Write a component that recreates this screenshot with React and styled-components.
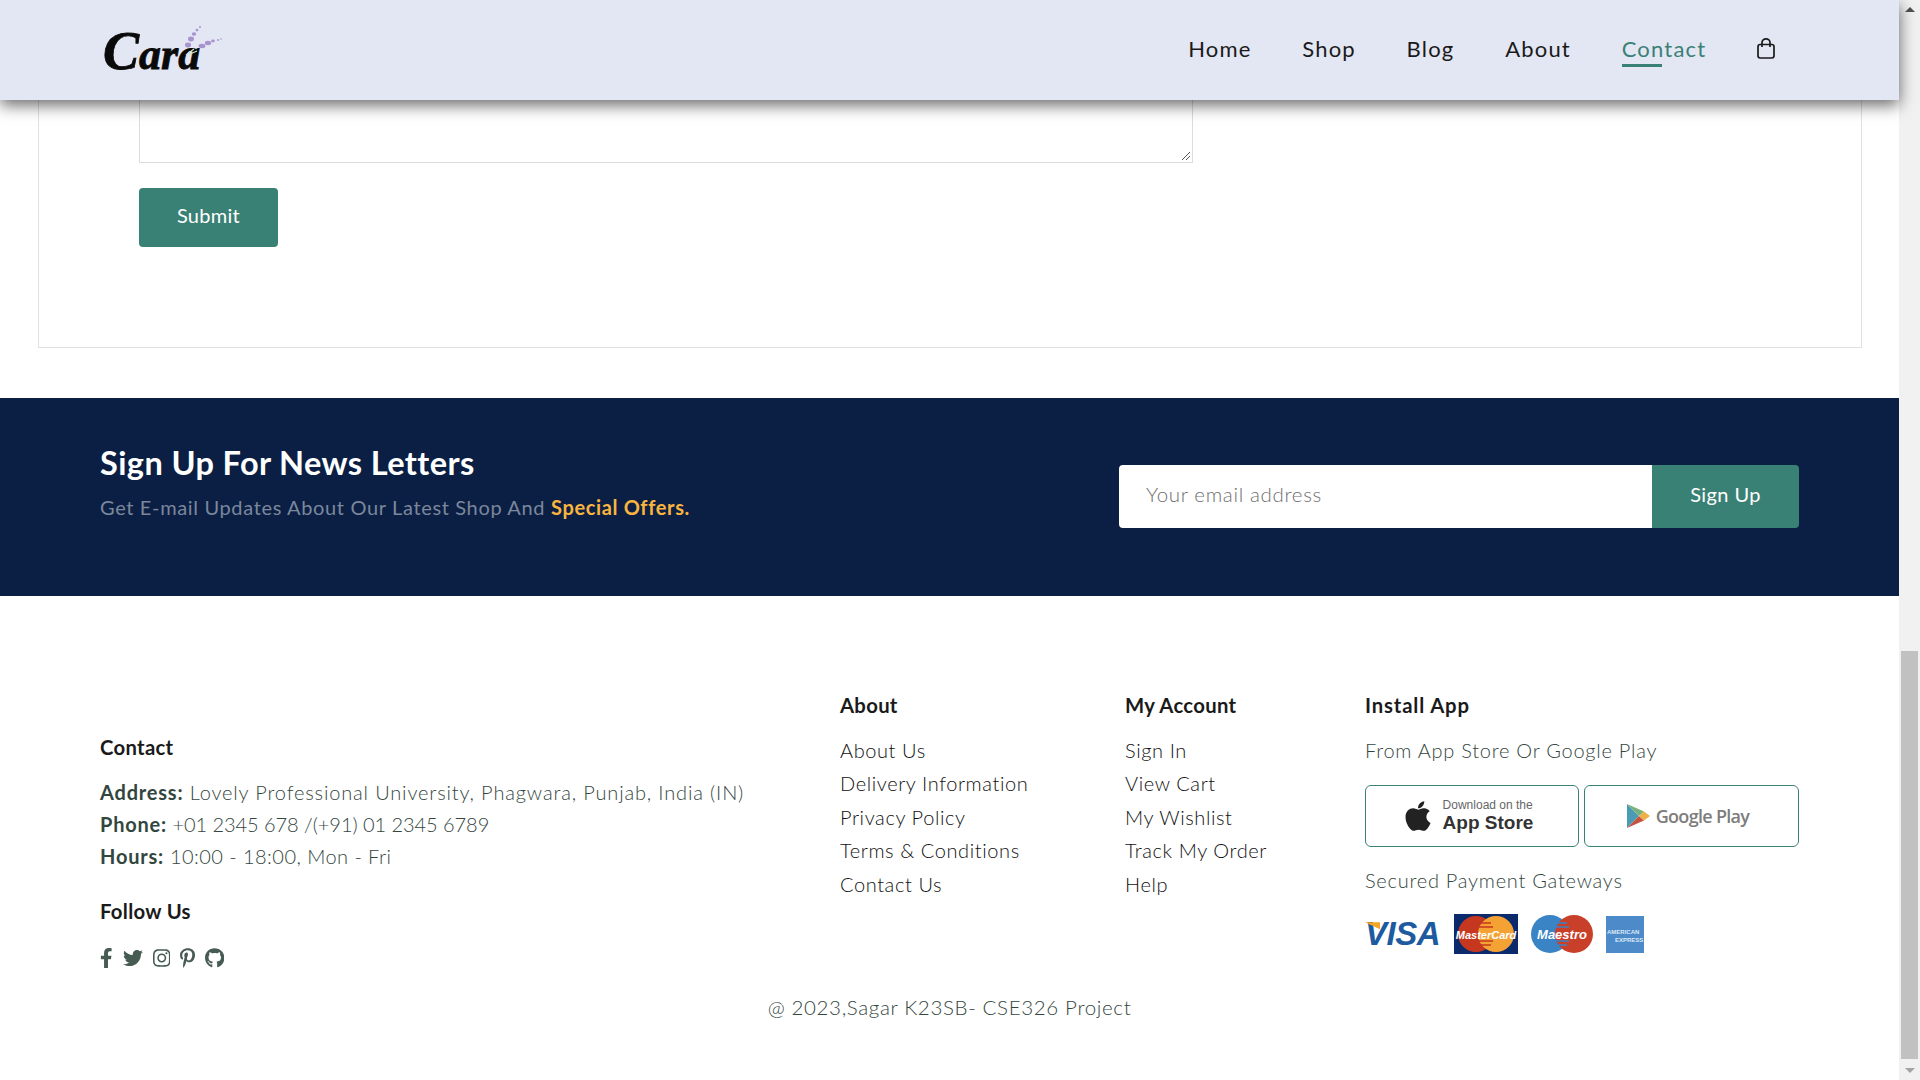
import React from 'react'
import styled, { createGlobalStyle } from 'styled-components'
import { FaApple, FaFacebookF, FaTwitter, FaInstagram, FaPinterestP, FaGithub } from 'react-icons/fa'

const GlobalStyle = createGlobalStyle`
  html, body {
    margin: 0;
    height: 100%;
    overflow: hidden;
    background: #fff;
    font-family: "Lato", "Open Sans", sans-serif;
  }
  * { box-sizing: border-box; }
`

const Screen = styled.div`
  display: flex;
  width: 1920px;
  height: 1080px;
  overflow: hidden;
`

const Page = styled.div`
  width: 1899px;
  display: flex;
  flex-direction: column;
`

const Scrollbar = styled.div`
  width: 21px;
  background: #f1f1f1;
  display: flex;
  flex-direction: column;
  align-items: center;
  padding: 7px 2px;
`

const Arrow = styled.div`
  width: 0;
  height: 0;
  border-left: 5px solid transparent;
  border-right: 5px solid transparent;
  border-${props => (props.down ? 'top' : 'bottom')}: 5px solid ${props => (props.down ? '#a3a3a3' : '#505050')};
`

const Thumb = styled.div`
  width: 17px;
  height: 408px;
  background: #c1c1c1;
  margin-top: auto;
  margin-bottom: 9px;
`

const Header = styled.header`
  height: 100px;
  flex: none;
  background: #e3e6f3;
  box-shadow: 0 5px 15px rgba(0, 0, 0, 0.6);
  position: relative;
  z-index: 2;
  display: flex;
  align-items: center;
  justify-content: space-between;
  padding: 0 124px 0 100px;
`

const Nav = styled.nav`
  display: flex;
  align-items: center;
  gap: 50.7px;
`

const NavLink = styled.a`
  position: relative;
  font-size: 22px;
  line-height: 28px;
  margin-top: -2px;
  color: ${props => (props.active ? '#3a8175' : '#1a1a1a')};
  letter-spacing: 1.2px;
  &::after {
    content: "";
    display: ${props => (props.active ? 'block' : 'none')};
    position: absolute;
    left: 0;
    bottom: -4px;
    width: 40px;
    height: 3px;
    background: #3a8175;
  }
`

const BagSvg = styled.svg`
  margin-top: -4px;
`

const ContactBox = styled.section`
  margin: 0 37px 0 38px;
  height: 248px;
  flex: none;
  border: 1px solid #e1e1e1;
  border-top: none;
  padding: 0 0 0 100px;
`

const TextArea = styled.div`
  position: relative;
  width: 1054px;
  height: 63px;
  border: 1px solid #dcdcdc;
  border-top: none;
`

const Grip = styled.svg`
  position: absolute;
  right: 1px;
  bottom: 1px;
`

const SubmitButton = styled.button`
  display: block;
  margin-top: 25px;
  width: 139px;
  height: 59px;
  padding: 0 0 6px;
  border: none;
  border-radius: 4px;
  background: #3a8175;
  color: #fff;
  font-family: inherit;
  font-size: 20px;
  letter-spacing: 0.3px;
`

const Newsletter = styled.section`
  margin-top: 50px;
  height: 198px;
  flex: none;
  background: #0b1f44;
  display: flex;
  align-items: center;
  justify-content: space-between;
  padding: 0 100px;
`

const NewsCopy = styled.div`
  margin-bottom: 31px;
`

const NewsTitle = styled.h4`
  margin: 0 0 12px;
  font-size: 32.5px;
  line-height: 38px;
  font-weight: 700;
  color: #fff;
  letter-spacing: 0.4px;
`

const NewsText = styled.p`
  margin: 0;
  font-size: 20px;
  line-height: 26px;
  letter-spacing: 0.65px;
  color: #7b879c;
  span { color: #f9b53f; font-weight: 700; }
`

const SignupForm = styled.div`
  display: flex;
  width: 680px;
  height: 63px;
  margin-bottom: 2px;
`

const EmailField = styled.div`
  flex: 1;
  background: #fff;
  border-radius: 4px 0 0 4px;
  display: flex;
  align-items: center;
  padding: 0 0 5px 27px;
  font-size: 20.5px;
  font-weight: 300;
  letter-spacing: 0.65px;
  color: #6f6f6f;
`

const SignupButton = styled.button`
  width: 147px;
  padding: 0 0 4px;
  border: none;
  border-radius: 0 4px 4px 0;
  background: #3a8175;
  color: #fff;
  font-family: inherit;
  font-size: 20px;
  letter-spacing: 0.4px;
`

const Footer = styled.footer`
  position: relative;
  display: grid;
  grid-template-columns: 740px 285px 240px 434px;
  padding: 0 100px;
  margin-top: 97px;
`

const ContactColumn = styled.div`
  padding-top: 42px;
`

const LinkColumn = styled.div`
  display: flex;
  flex-direction: column;
  align-items: flex-start;
`

const ColumnTitle = styled.h4`
  margin: 0 0 17px;
  font-size: 20.3px;
  line-height: 24px;
  font-weight: 700;
  color: #1a1a1a;
  letter-spacing: ${props => props.spacing || 0.3}px;
`

const FollowTitle = styled(ColumnTitle)`
  margin: 27px 0 25px;
`

const InfoLine = styled.p`
  margin: 0;
  font-size: 20px;
  line-height: 32px;
  font-weight: 300;
  color: #33463e;
  letter-spacing: ${props => props.spacing}px;
  strong { font-weight: 700; letter-spacing: 0.8px; }
`

const FooterLink = styled.a`
  font-size: 20px;
  line-height: 33.4px;
  font-weight: 300;
  color: #111;
  letter-spacing: 0.6px;
`

const MutedText = styled.p`
  margin: 0;
  font-size: 20px;
  line-height: 33.6px;
  font-weight: 300;
  color: #33463e;
  letter-spacing: 0.75px;
`

const SocialRow = styled.div`
  display: flex;
  align-items: center;
  gap: 10px;
  color: #465b52;
`

const SocialIcon = styled.span`
  display: block;
  width: ${props => props.size}px;
  height: 20px;
  svg { display: block; width: 100%; height: 100%; }
`

const StoreRow = styled.div`
  display: flex;
  gap: 5px;
  margin: 17px 0 17px;
`

const StoreBadge = styled.div`
  width: ${props => props.width}px;
  height: 62px;
  padding-right: ${props => props.inset}px;
  border: 1px solid #3a8175;
  border-radius: 6px;
  display: flex;
  align-items: center;
  justify-content: center;
  gap: ${props => props.spread}px;
  color: #222;
`

const BadgeText = styled.div`
  display: flex;
  flex-direction: column;
  font-family: "Liberation Sans", sans-serif;
  small { font-size: 12px; line-height: 14px; color: #666; }
  b { font-size: 19px; line-height: 22px; font-weight: 700; color: #333; }
`

const PlayName = styled.span`
  font-family: "Open Sans", sans-serif;
  font-size: 18px;
  font-weight: 600;
  letter-spacing: -0.7px;
  color: #7d7d7d;
`

const PayRow = styled.div`
  display: flex;
  align-items: center;
  gap: 12px;
  margin-top: 17px;
  height: 40px;
`

const VisaMark = styled.span`
  width: 77px;
  position: relative;
  font-family: "Liberation Sans", sans-serif;
  font-size: 33px;
  font-weight: 700;
  font-style: italic;
  letter-spacing: -0.5px;
  color: #1d5a9f;
  &::before {
    content: "";
    position: absolute;
    left: 0;
    top: 7px;
    width: 15px;
    height: 7px;
    background: #f5a623;
    clip-path: polygon(0 0, 100% 0, 100% 100%);
  }
`

const Copyright = styled.p`
  margin: 26px 0 0;
  text-align: center;
  font-size: 20.5px;
  font-weight: 300;
  line-height: 26px;
  letter-spacing: 0.65px;
  color: #33463e;
`

const Logo = () => (
  <svg width="122" height="50" viewBox="0 0 122 50" overflow="visible">
    <text x="3" y="44" fontFamily="Liberation Serif" fontStyle="italic" fontWeight="700" fill="#0a0a0a" stroke="#0a0a0a" strokeWidth="0.8">
      <tspan fontSize="54">C</tspan>
      <tspan fontSize="44">ara</tspan>
    </text>
    <g fill="#a893cf">
      <ellipse cx="88" cy="20" rx="3" ry="2.4" />
      <ellipse cx="91" cy="14" rx="3" ry="2.4" />
      <ellipse cx="94" cy="9" rx="2.2" ry="1.8" />
      <ellipse cx="97" cy="5" rx="1.4" ry="1.2" />
      <ellipse cx="100" cy="2" rx="1" ry="1" />
      <ellipse cx="102" cy="21" rx="3.4" ry="2.2" />
      <ellipse cx="108" cy="18" rx="3.2" ry="2.2" />
      <ellipse cx="113" cy="16" rx="1.8" ry="1.4" />
      <ellipse cx="118" cy="15" rx="1" ry="1" />
      <ellipse cx="121" cy="14" rx="0.8" ry="0.8" />
    </g>
    <path d="M86 30 L94 24 M90 29 L97 26" stroke="#cfe6c8" strokeWidth="1.2" />
  </svg>
)

const BagIcon = () => (
  <BagSvg width="18" height="21" viewBox="0 0 18 21" fill="none" stroke="#1a1a1a" strokeWidth="1.7">
    <rect x="1" y="6.5" width="16" height="13.5" rx="2.2" />
    <path d="M5 9V4.5a4 3.6 0 0 1 8 0V9" />
  </BagSvg>
)

const PlayIcon = () => (
  <svg width="25" height="26" viewBox="0 0 25 26">
    <polygon points="1,1 13,13 1,25" fill="#4a9bb5" />
    <polygon points="1,1 13,13 18,8.5" fill="#79b27b" />
    <polygon points="1,25 13,13 18,17.5" fill="#c5533f" />
    <polygon points="18,8.5 24,13 18,17.5 13,13" fill="#eeb04a" />
  </svg>
)

const MasterCard = () => (
  <svg width="64" height="40" viewBox="0 0 64 40">
    <rect width="64" height="40" fill="#0a2a6c" />
    <circle cx="22" cy="20" r="18" fill="#c6371f" />
    <circle cx="42" cy="20" r="18" fill="#f4a233" />
    <path d="M27 9h10M25 13h14M25 27h14M27 31h10" stroke="#c6371f" strokeWidth="1.6" />
    <text x="32" y="24.5" textAnchor="middle" fontFamily="Liberation Sans" fontStyle="italic" fontWeight="700" fontSize="11" fill="#fff">MasterCard</text>
  </svg>
)

const Maestro = () => (
  <svg width="64" height="40" viewBox="0 0 64 40">
    <circle cx="20" cy="20" r="19" fill="#3a83c5" />
    <circle cx="44" cy="20" r="19" fill="#c9402a" />
    <path d="M27 9h10M25 13h14M25 27h14M27 31h10" stroke="#3a83c5" strokeWidth="1.6" />
    <text x="32" y="25" textAnchor="middle" fontFamily="Liberation Sans" fontStyle="italic" fontWeight="700" fontSize="13" fill="#fff">Maestro</text>
  </svg>
)

const Amex = () => (
  <svg width="38" height="37" viewBox="0 0 38 37">
    <rect width="38" height="37" fill="#4c8ac9" />
    <text x="1" y="18" fontFamily="Liberation Sans" fontWeight="700" fontSize="6" fill="#dbe9f6">AMERICAN</text>
    <text x="9" y="26" fontFamily="Liberation Sans" fontWeight="700" fontSize="6" fill="#dbe9f6">EXPRESS</text>
  </svg>
)

const aboutLinks = ['About Us', 'Delivery Information', 'Privacy Policy', 'Terms & Conditions', 'Contact Us']
const accountLinks = ['Sign In', 'View Cart', 'My Wishlist', 'Track My Order', 'Help']

const App = () => (
  <Screen>
    <GlobalStyle />
    <Page>
      <Header>
        <Logo />
        <Nav>
          <NavLink>Home</NavLink>
          <NavLink>Shop</NavLink>
          <NavLink>Blog</NavLink>
          <NavLink>About</NavLink>
          <NavLink active>Contact</NavLink>
          <BagIcon />
        </Nav>
      </Header>
      <ContactBox>
        <TextArea>
          <Grip width="10" height="10" viewBox="0 0 10 10" stroke="#555" strokeWidth="1">
            <path d="M1 9L9 1M5 9L9 5" />
          </Grip>
        </TextArea>
        <SubmitButton>Submit</SubmitButton>
      </ContactBox>
      <Newsletter>
        <NewsCopy>
          <NewsTitle>Sign Up For News Letters</NewsTitle>
          <NewsText>Get E-mail Updates About Our Latest Shop And <span>Special Offers.</span></NewsText>
        </NewsCopy>
        <SignupForm>
          <EmailField>Your email address</EmailField>
          <SignupButton>Sign Up</SignupButton>
        </SignupForm>
      </Newsletter>
      <Footer>
        <ContactColumn>
          <ColumnTitle>Contact</ColumnTitle>
          <InfoLine spacing={0.85}><strong>Address:</strong> Lovely Professional University, Phagwara, Punjab, India (IN)</InfoLine>
          <InfoLine spacing={-0.05}><strong>Phone:</strong> +01 2345 678 /(+91) 01 2345 6789</InfoLine>
          <InfoLine spacing={0.45}><strong>Hours:</strong> 10:00 - 18:00, Mon - Fri</InfoLine>
          <FollowTitle>Follow Us</FollowTitle>
          <SocialRow>
            <SocialIcon size={12.5}><FaFacebookF /></SocialIcon>
            <SocialIcon size={20}><FaTwitter /></SocialIcon>
            <SocialIcon size={17.5}><FaInstagram /></SocialIcon>
            <SocialIcon size={15}><FaPinterestP /></SocialIcon>
            <SocialIcon size={19.4}><FaGithub /></SocialIcon>
          </SocialRow>
        </ContactColumn>
        <LinkColumn>
          <ColumnTitle>About</ColumnTitle>
          {aboutLinks.map(link => <FooterLink key={link}>{link}</FooterLink>)}
        </LinkColumn>
        <LinkColumn>
          <ColumnTitle>My Account</ColumnTitle>
          {accountLinks.map(link => <FooterLink key={link}>{link}</FooterLink>)}
        </LinkColumn>
        <div>
          <ColumnTitle spacing={0.85}>Install App</ColumnTitle>
          <MutedText>From App Store Or Google Play</MutedText>
          <StoreRow>
            <StoreBadge width={214} inset={10} spread={8}>
              <FaApple size={34} />
              <BadgeText>
                <small>Download on the</small>
                <b>App Store</b>
              </BadgeText>
            </StoreBadge>
            <StoreBadge width={215} inset={8} spread={5}>
              <PlayIcon />
              <PlayName>Google Play</PlayName>
            </StoreBadge>
          </StoreRow>
          <MutedText>Secured Payment Gateways</MutedText>
          <PayRow>
            <VisaMark>VISA</VisaMark>
            <MasterCard />
            <Maestro />
            <Amex />
          </PayRow>
        </div>
      </Footer>
      <Copyright>@ 2023,Sagar K23SB- CSE326 Project</Copyright>
    </Page>
    <Scrollbar>
      <Arrow />
      <Thumb />
      <Arrow down />
    </Scrollbar>
  </Screen>
)

export default App
